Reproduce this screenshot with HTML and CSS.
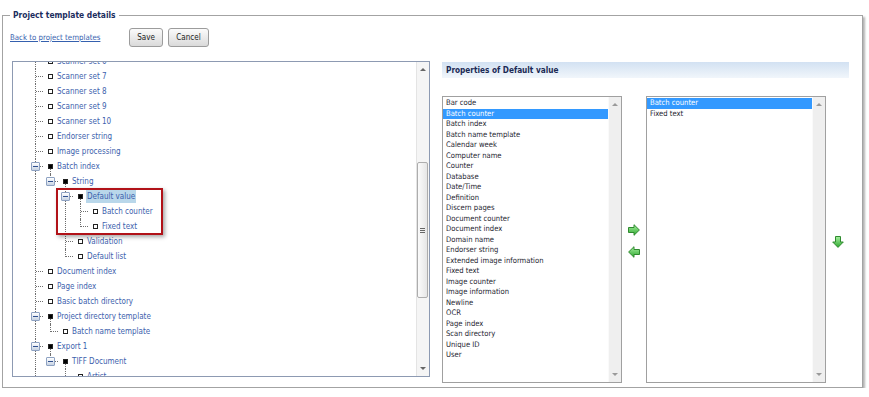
FILE: index.html
```html
<!DOCTYPE html>
<html lang="en">

<head>
	<meta charset="UTF-8">
	<title>Project template details</title>
	<link rel="stylesheet" href="styles.css">
</head>

<body>
	<fieldset class="frame">
		<legend>Project template details</legend>

		<div class="toolbar">
			<a class="back" href="#">Back to project templates</a>
			<button class="btn save">Save</button>
			<button class="btn cancel">Cancel</button>
		</div>

		<div class="main">
			<!-- tree, scrolled down a bit -->
			<section class="tree">
				<div class="tree-body">
					<div class="tree-list">
						<div class="row"><span class="cell tee"></span><span class="sq"></span><span class="lbl">Scanner set 6</span></div>
						<div class="row"><span class="cell tee"></span><span class="sq"></span><span class="lbl">Scanner set 7</span></div>
						<div class="row"><span class="cell tee"></span><span class="sq"></span><span class="lbl">Scanner set 8</span></div>
						<div class="row"><span class="cell tee"></span><span class="sq"></span><span class="lbl">Scanner set 9</span></div>
						<div class="row"><span class="cell tee"></span><span class="sq"></span><span class="lbl">Scanner set 10</span></div>
						<div class="row"><span class="cell tee"></span><span class="sq"></span><span class="lbl">Endorser string</span></div>
						<div class="row"><span class="cell tee"></span><span class="sq"></span><span class="lbl">Image processing</span></div>
						<div class="row"><span class="cell tee"><i class="exp"></i></span><span class="sq parent"></span><span class="lbl">Batch index</span></div>
						<div class="row"><span class="cell line"></span><span class="cell elbow"><i class="exp"></i></span><span class="sq parent"></span><span class="lbl">String</span></div>
						<div class="row"><span class="cell line"></span><span class="cell"></span><span class="cell tee"><i class="exp"></i></span><span class="sq parent"></span><span class="lbl sel">Default value</span></div>
						<div class="row"><span class="cell line"></span><span class="cell"></span><span class="cell line"></span><span class="cell tee"></span><span class="sq"></span><span class="lbl">Batch counter</span></div>
						<div class="row"><span class="cell line"></span><span class="cell"></span><span class="cell line"></span><span class="cell elbow"></span><span class="sq"></span><span class="lbl">Fixed text</span></div>
						<div class="row"><span class="cell line"></span><span class="cell"></span><span class="cell tee"></span><span class="sq"></span><span class="lbl">Validation</span></div>
						<div class="row"><span class="cell line"></span><span class="cell"></span><span class="cell elbow"></span><span class="sq"></span><span class="lbl">Default list</span></div>
						<div class="row"><span class="cell tee"></span><span class="sq"></span><span class="lbl">Document index</span></div>
						<div class="row"><span class="cell tee"></span><span class="sq"></span><span class="lbl">Page index</span></div>
						<div class="row"><span class="cell tee"></span><span class="sq"></span><span class="lbl">Basic batch directory</span></div>
						<div class="row"><span class="cell tee"><i class="exp"></i></span><span class="sq parent"></span><span class="lbl">Project directory template</span></div>
						<div class="row"><span class="cell line"></span><span class="cell elbow"></span><span class="sq"></span><span class="lbl">Batch name template</span></div>
						<div class="row"><span class="cell tee"><i class="exp"></i></span><span class="sq parent"></span><span class="lbl">Export 1</span></div>
						<div class="row"><span class="cell line"></span><span class="cell elbow"><i class="exp"></i></span><span class="sq parent"></span><span class="lbl">TIFF Document</span></div>
						<div class="row"><span class="cell line"></span><span class="cell"></span><span class="cell tee"></span><span class="sq"></span><span class="lbl">Artist</span></div>
					</div>
					<!-- red annotation round the selected node -->
					<div class="callout"></div>
				</div>
				<div class="vscroll">
					<span class="sb-btn"><i class="tri up"></i></span>
					<span class="sb-track"><span class="thumb"><i></i><i></i><i></i></span></span>
					<span class="sb-btn"><i class="tri down"></i></span>
				</div>
			</section>

			<section class="props">
				<h2 class="props-head">Properties of Default value</h2>
				<div class="lists">
					<div class="listbox">
						<ul class="items">
							<li>Bar code</li>
							<li class="sel">Batch counter</li>
							<li>Batch index</li>
							<li>Batch name template</li>
							<li>Calendar week</li>
							<li>Computer name</li>
							<li>Counter</li>
							<li>Database</li>
							<li>Date/Time</li>
							<li>Definition</li>
							<li>Discern pages</li>
							<li>Document counter</li>
							<li>Document index</li>
							<li>Domain name</li>
							<li>Endorser string</li>
							<li>Extended image information</li>
							<li>Fixed text</li>
							<li>Image counter</li>
							<li>Image information</li>
							<li>Newline</li>
							<li>OCR</li>
							<li>Page index</li>
							<li>Scan directory</li>
							<li>Unique ID</li>
							<li>User</li>
						</ul>
						<div class="vscroll flat">
							<span class="sb-btn"><i class="tri up"></i></span>
							<span class="sb-track"></span>
							<span class="sb-btn"><i class="tri down"></i></span>
						</div>
					</div>

					<div class="move">
						<svg width="12" height="12" viewBox="0 0 12 12">
							<defs><linearGradient id="g1" x1="0" y1="0" x2="0" y2="1"><stop offset="0" stop-color="#a6f0a0"/><stop offset="1" stop-color="#2fa82f"/></linearGradient></defs>
							<path d="M0.5 3.5 H6 V0.7 L11.4 6 L6 11.3 V8.5 H0.5 Z" fill="url(#g1)" stroke="#2f8a2f" stroke-width="1"/>
						</svg>
						<svg width="12" height="12" viewBox="0 0 12 12">
							<defs><linearGradient id="g2" x1="0" y1="0" x2="0" y2="1"><stop offset="0" stop-color="#a6f0a0"/><stop offset="1" stop-color="#2fa82f"/></linearGradient></defs>
							<path d="M11.5 3.5 H6 V0.7 L0.6 6 L6 11.3 V8.5 H11.5 Z" fill="url(#g2)" stroke="#2f8a2f" stroke-width="1"/>
						</svg>
					</div>

					<div class="listbox">
						<ul class="items">
							<li class="sel">Batch counter</li>
							<li>Fixed text</li>
						</ul>
						<div class="vscroll flat">
							<span class="sb-btn"><i class="tri up"></i></span>
							<span class="sb-track"></span>
							<span class="sb-btn"><i class="tri down"></i></span>
						</div>
					</div>

					<div class="order">
						<svg width="12" height="12" viewBox="0 0 12 12">
							<defs><linearGradient id="g3" x1="0" y1="0" x2="0" y2="1"><stop offset="0" stop-color="#a6f0a0"/><stop offset="1" stop-color="#2fa82f"/></linearGradient></defs>
							<path d="M3.5 0.5 V6 H0.7 L6 11.4 L11.3 6 H8.5 V0.5 Z" fill="url(#g3)" stroke="#2f8a2f" stroke-width="1"/>
						</svg>
					</div>
				</div>
			</section>
		</div>
	</fieldset>
</body>

</html>
```

FILE: styles.css
```css
body {
	margin: 0;
	padding: 0;
	background-color: #fff;
	font-family: "DejaVu Sans Condensed", "DejaVu Sans", sans-serif;
	font-size: 8px;
}

/* outer frame with legend */
.frame {
	margin: 9px 0 0 2px;
	width: 861px;
	box-sizing: border-box;
	min-inline-size: 0;
	border: 1px solid #a3a3a3;
	padding: 7px 0 4px 7px;
	box-shadow: 2px 2px 2px rgba(0, 0, 0, 0.3);
}

.frame legend {
	padding: 0 3px;
	font-weight: bold;
	font-size: 8.4px;
	line-height: 12px;
	color: #1b2d5e;
}

.toolbar {
	display: flex;
	align-items: center;
	height: 19px;
}

.back {
	width: 119px;
	color: #3560ae;
	font-size: 7.8px;
	text-decoration: underline;
}

.btn {
	height: 19px;
	box-sizing: border-box;
	margin: 0 5px 0 0;
	padding: 0;
	border: 1px solid #9c9c9c;
	border-radius: 3px;
	background: linear-gradient(#fbfbfb, #dadada);
	font-family: inherit;
	font-size: 8px;
	color: #222;
}

.save {
	width: 34px;
}

.cancel {
	width: 41px;
}

.main {
	display: flex;
	align-items: flex-start;
	margin-top: 14px;
}

/* tree */
.tree {
	margin-left: 2px;
	width: 418px;
	height: 316px;
	box-sizing: border-box;
	border: 1px solid #8d9ab2;
	display: flex;
}

.tree-body {
	flex: 1;
	position: relative;
	overflow: hidden;
	padding-left: 15px;
}

.tree-list {
	margin-top: -8px;
}

.row {
	display: flex;
	align-items: center;
	height: 15px;
	white-space: nowrap;
}

.cell {
	position: relative;
	flex: none;
	width: 15px;
	height: 15px;
}

.line::before,
.tee::before,
.elbow::before {
	content: "";
	position: absolute;
	left: 7px;
	top: 0;
	bottom: 0;
	border-left: 1px dotted #6f6f6f;
}

.elbow::before {
	bottom: auto;
	height: 8px;
}

.tee::after,
.elbow::after {
	content: "";
	position: absolute;
	left: 8px;
	right: 0;
	top: 7px;
	border-top: 1px dotted #6f6f6f;
}

.exp {
	position: absolute;
	z-index: 1;
	left: 3px;
	top: 3px;
	width: 9px;
	height: 9px;
	box-sizing: border-box;
	border: 1px solid #8ea2c2;
	border-radius: 1px;
	background: linear-gradient(#ffffff, #c7d3e3);
}

.exp::after {
	content: "";
	position: absolute;
	left: 1px;
	right: 1px;
	top: 3px;
	height: 1px;
	background: #2f4f8f;
}

.sq {
	position: relative;
	flex: none;
	width: 5px;
	height: 5px;
	box-sizing: border-box;
	margin: 0 3px 0 5px;
	border: 1px solid #222;
	background: #fff;
}

.sq.parent {
	background: #000;
}

.sq.parent::after {
	content: "";
	position: absolute;
	left: 1px;
	top: 4px;
	height: 5px;
	border-left: 1px dotted #6f6f6f;
}

.lbl {
	padding: 2px 1px;
	line-height: 9px;
	color: #3d5fad;
}

.lbl.sel {
	background: #b9d7ea;
}

.callout {
	position: absolute;
	left: 43px;
	top: 126px;
	width: 107px;
	height: 47px;
	box-sizing: border-box;
	border: 2px solid #b11218;
	box-shadow: 2px 2px 4px rgba(0, 0, 0, 0.35);
}

/* scrollbars */
.vscroll {
	flex: none;
	width: 12px;
	display: flex;
	flex-direction: column;
	background: #f5f5f5;
	border-left: 1px solid #e4e4e4;
}

.vscroll.flat {
	background: #efefef;
	border-left: 1px solid #fafafa;
}

.sb-btn {
	height: 15px;
	display: flex;
	align-items: center;
	justify-content: center;
}

.sb-track {
	flex: 1;
}

.thumb {
	display: flex;
	flex-direction: column;
	align-items: center;
	justify-content: center;
	gap: 1px;
	width: 11px;
	height: 136px;
	margin-top: 85px;
	box-sizing: border-box;
	border: 1px solid #adadad;
	border-radius: 2px;
	background: linear-gradient(to right, #fbfbfb, #e6e6e6);
}

.thumb i {
	width: 5px;
	height: 1px;
	background: #666;
}

.tri {
	width: 0;
	height: 0;
	border-left: 3px solid transparent;
	border-right: 3px solid transparent;
}

.tri.up {
	border-bottom: 3px solid #666;
}

.tri.down {
	border-top: 3px solid #666;
}

.flat .tri.up {
	border-bottom-color: #9a9a9a;
}

.flat .tri.down {
	border-top-color: #9a9a9a;
}

/* properties */
.props {
	margin-left: 12px;
	width: 407px;
}

.props-head {
	margin: 1px 0 0;
	height: 16px;
	padding-left: 4px;
	background: linear-gradient(#d2e1f2, #f1f6fb);
	font-size: 8.2px;
	line-height: 16px;
	color: #1b2a55;
}

.lists {
	display: flex;
	margin-top: 18px;
	height: 287px;
}

.listbox {
	width: 180px;
	box-sizing: border-box;
	border: 1px solid #a0a0a0;
	display: flex;
}

.items {
	flex: 1;
	margin: 0;
	padding: 1px 0 0;
	list-style: none;
}

.items li {
	height: 10.5px;
	line-height: 10.5px;
	padding-left: 3px;
	font-size: 7.6px;
	color: #1e1e30;
	white-space: nowrap;
}

.items li.sel {
	background: #3399ff;
	color: #fff;
}

.move {
	width: 24px;
	display: flex;
	flex-direction: column;
	align-items: center;
	justify-content: center;
	gap: 10px;
	padding-top: 3px;
}

.order {
	width: 23px;
	display: flex;
	align-items: center;
	justify-content: center;
	padding-top: 5px;
}
```
